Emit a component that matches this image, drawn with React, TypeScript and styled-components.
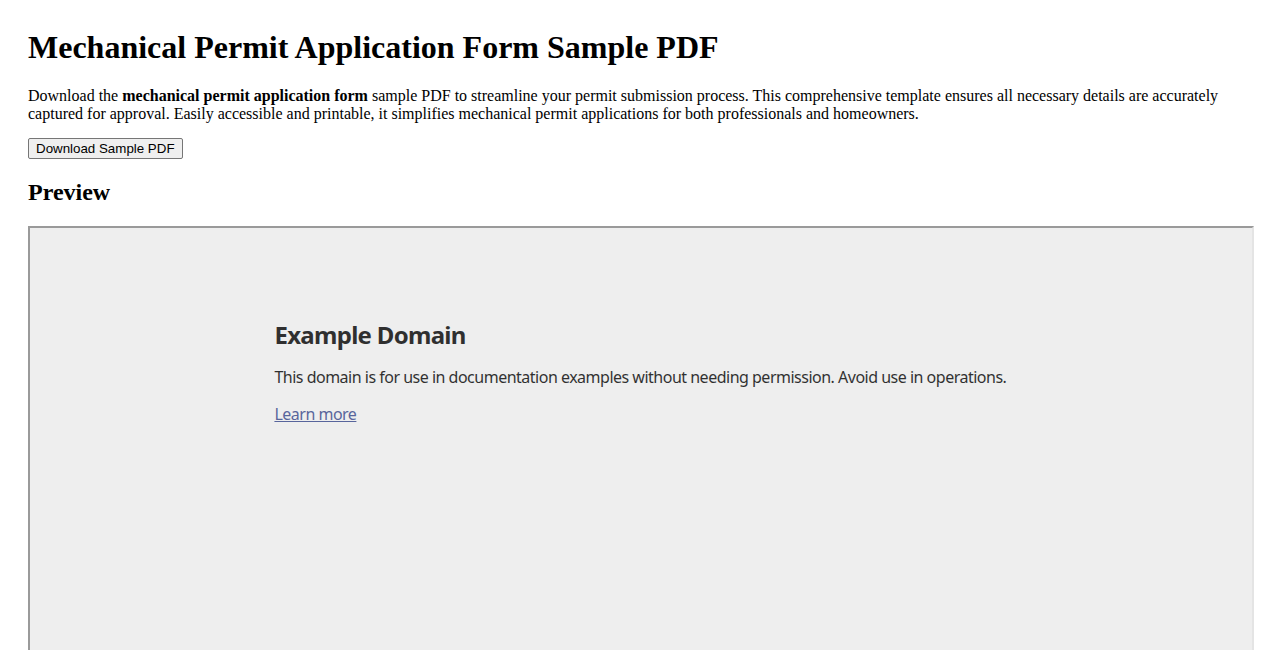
import React from "react";
import styled, { createGlobalStyle } from "styled-components";

const GlobalStyle = createGlobalStyle`
  html, body {
    margin: 0;
    background: #ffffff;
  }
  body {
    padding: 28px;
    font-family: "Liberation Serif", "Times New Roman", serif;
    color: #000000;
  }
`;

const App = () => {
  return (
    <>
      <GlobalStyle />
      <Page>
        <Title>Mechanical Permit Application Form Sample PDF</Title>
        <Intro>
          Download the <strong>mechanical permit application form</strong> sample PDF to streamline your
          permit submission process. This comprehensive template ensures all necessary details are
          accurately captured for approval. Easily accessible and printable, it simplifies mechanical
          permit applications for both professionals and homeowners.
        </Intro>
        <DownloadButton type="button">Download Sample PDF</DownloadButton>
        <SectionTitle>Preview</SectionTitle>
        <PreviewFrame>
          <FrameBody>
            <FrameHeading>Example Domain</FrameHeading>
            <FrameText>
              This domain is for use in documentation examples without needing permission. Avoid use
              in operations.
            </FrameText>
            <FrameText>
              <FrameLink href="#">Learn more</FrameLink>
            </FrameText>
          </FrameBody>
        </PreviewFrame>
      </Page>
    </>
  );
};

export default App;

const Page = styled.main`
  display: block;
`;

const Title = styled.h1`
  margin: 1px 0 21px;
  font-size: 32px;
  font-weight: 700;
  line-height: 37px;
`;

const Intro = styled.p`
  margin: 0 0 15px;
  font-size: 16px;
  line-height: 18px;

  strong {
    font-weight: 700;
  }
`;

const DownloadButton = styled.button`
  display: block;
  height: 21px;
  padding: 1px 7px;
  font-family: "Liberation Sans", Arial, sans-serif;
  font-size: 13.33px;
  color: #000000;
  background: #efefef;
  border: 1px solid #767676;
  border-radius: 2px;
`;

const SectionTitle = styled.h2`
  margin: 20px 0 20px;
  font-size: 24px;
  font-weight: 700;
  line-height: 27px;
`;

const PreviewFrame = styled.div`
  box-sizing: content-box;
  width: 100%;
  height: 600px;
  border: 2px solid;
  border-color: #9a9a9a #e4e4e4 #e4e4e4 #9a9a9a;
  background: #eeeeee;
  overflow: hidden;
`;

const FrameBody = styled.div`
  width: 60%;
  margin: 91px auto;
  opacity: 0.8;
  font-family: "Noto Sans", "Open Sans", sans-serif;
  color: #000000;
  letter-spacing: -0.5px;
`;

const FrameHeading = styled.h1`
  margin: 0 0 16px;
  font-size: 24px;
  font-weight: 700;
  line-height: 32px;
  letter-spacing: -0.7px;
`;

const FrameText = styled.p`
  margin: 0 0 16px;
  font-size: 16px;
  line-height: 21px;
`;

const FrameLink = styled.a`
  color: #334488;
  text-decoration: underline;
`;
